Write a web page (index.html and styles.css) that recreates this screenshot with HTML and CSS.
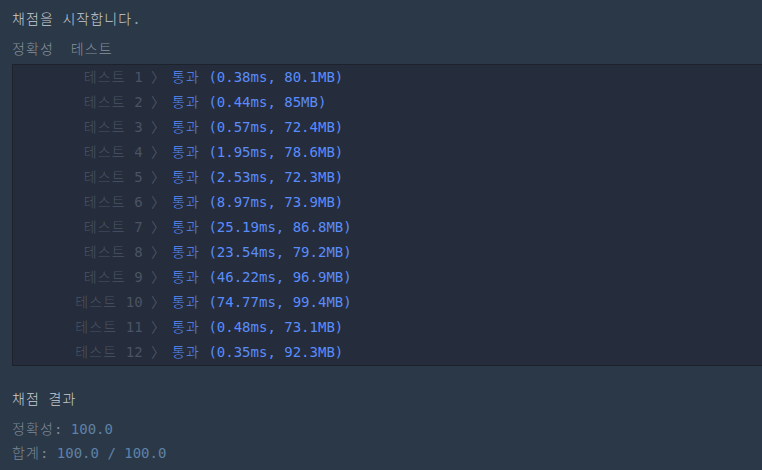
FILE: index.html
```html
<!DOCTYPE html>
<html lang="ko">
<head>
<meta charset="utf-8">
<link rel="stylesheet" href="styles.css">
</head>
<body>
<div class="console">
  <p class="title"><span class="ko">채점을</span> <span class="ko">시작합니다</span><span class="dot">.</span></p>
  <p class="tabs"><span class="ko">정확성</span>  <span class="ko">테스트</span></p>
  <div class="results">
    <div class="row"><span class="label"><span class="ko">테스트</span> 1 〉</span><span class="pass"><span class="ko">통과</span> (0.38ms, 80.1MB)</span></div>
    <div class="row"><span class="label"><span class="ko">테스트</span> 2 〉</span><span class="pass"><span class="ko">통과</span> (0.44ms, 85MB)</span></div>
    <div class="row"><span class="label"><span class="ko">테스트</span> 3 〉</span><span class="pass"><span class="ko">통과</span> (0.57ms, 72.4MB)</span></div>
    <div class="row"><span class="label"><span class="ko">테스트</span> 4 〉</span><span class="pass"><span class="ko">통과</span> (1.95ms, 78.6MB)</span></div>
    <div class="row"><span class="label"><span class="ko">테스트</span> 5 〉</span><span class="pass"><span class="ko">통과</span> (2.53ms, 72.3MB)</span></div>
    <div class="row"><span class="label"><span class="ko">테스트</span> 6 〉</span><span class="pass"><span class="ko">통과</span> (8.97ms, 73.9MB)</span></div>
    <div class="row"><span class="label"><span class="ko">테스트</span> 7 〉</span><span class="pass"><span class="ko">통과</span> (25.19ms, 86.8MB)</span></div>
    <div class="row"><span class="label"><span class="ko">테스트</span> 8 〉</span><span class="pass"><span class="ko">통과</span> (23.54ms, 79.2MB)</span></div>
    <div class="row"><span class="label"><span class="ko">테스트</span> 9 〉</span><span class="pass"><span class="ko">통과</span> (46.22ms, 96.9MB)</span></div>
    <div class="row"><span class="label"><span class="ko">테스트</span> 10 〉</span><span class="pass"><span class="ko">통과</span> (74.77ms, 99.4MB)</span></div>
    <div class="row"><span class="label"><span class="ko">테스트</span> 11 〉</span><span class="pass"><span class="ko">통과</span> (0.48ms, 73.1MB)</span></div>
    <div class="row"><span class="label"><span class="ko">테스트</span> 12 〉</span><span class="pass"><span class="ko">통과</span> (0.35ms, 92.3MB)</span></div>
  </div>
  <p class="summary-title"><span class="ko">채점</span> <span class="ko">결과</span></p>
  <p class="summary"><span class="ko">정확성</span>: <span class="num">100.0</span></p>
  <p class="summary"><span class="ko">합계</span>: <span class="num">100.0 / 100.0</span></p>
</div>
</body>
</html>
```
FILE: styles.css
```css
html, body {
  margin: 0;
  padding: 0;
  background: #2b3847;
  overflow: hidden;
}
body {
  font-family: "DejaVu Sans Mono", "Noto Sans CJK KR", monospace;
  font-size: 14px;
}
.console {
  padding: 7px 0 0 12px;
}
p {
  margin: 0;
  line-height: 24px;
  white-space: pre;
}
.ko {
  letter-spacing: 1.1px;
  font-weight: 300;
}
.title {
  color: #c8ccd2;
}
.dot {
  color: #8aa0b4;
}
.tabs {
  margin-top: 6px;
  color: #86909c;
}
.results {
  margin-top: 3px;
  margin-right: -10px;
  background: #252c3b;
  border: 1px solid #1d222d;
}
.row {
  display: flex;
  height: 25px;
  line-height: 25px;
  white-space: pre;
}
.label {
  width: 152px;
  text-align: right;
  color: #4a5464;
}
.pass {
  padding-left: 7px;
  color: #5a8cfb;
}
.summary-title {
  margin-top: 21px;
  color: #c8ccd2;
}
.summary {
  color: #7c8896;
}
.summary-title + .summary {
  margin-top: 6px;
}
.num {
  color: #5f82a8;
}
```
